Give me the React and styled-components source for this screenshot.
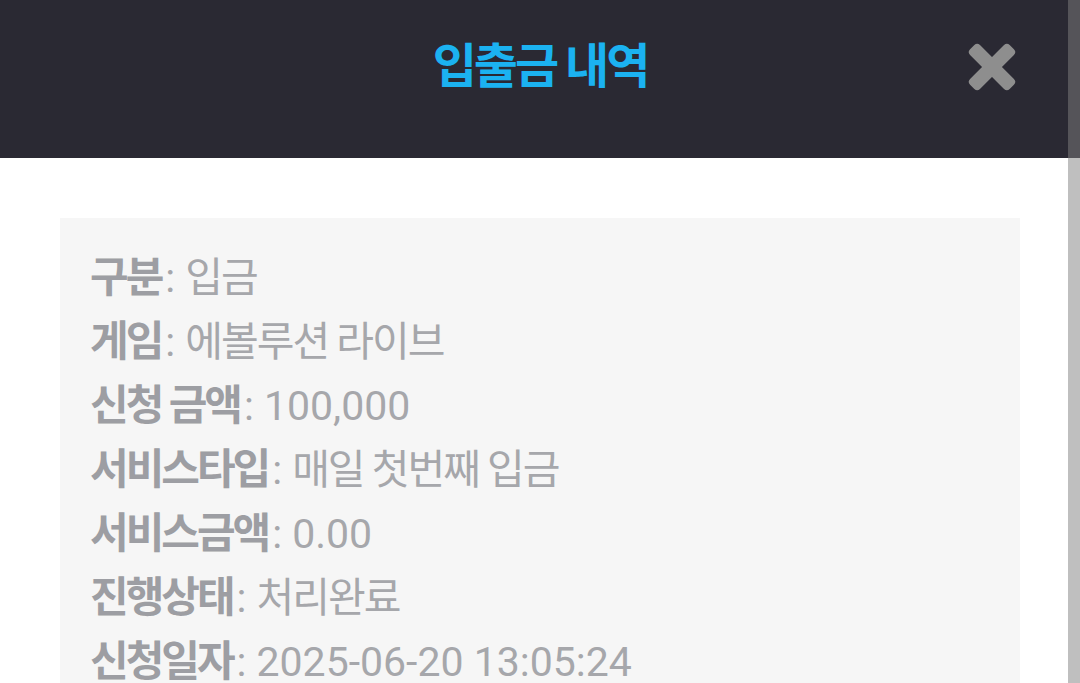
import React from "react";
import styled, { createGlobalStyle } from "styled-components";

const GlobalStyle = createGlobalStyle`
  html, body {
    margin: 0;
    padding: 0;
    overflow: hidden;
    background: #ffffff;
  }
  body {
    font-family: Roboto, "Noto Sans CJK KR", sans-serif;
  }
`;

const Page = styled.div`
  position: relative;
  width: 100%;
  min-height: 100vh;
  background: #ffffff;
`;

const Header = styled.header`
  display: grid;
  grid-template-columns: 1fr auto 1fr;
  align-items: center;
  align-content: start;
  height: 158px;
  box-sizing: border-box;
  padding: 38px 0 0;
  background: #2a2933;
`;

const Title = styled.h1`
  grid-column: 2;
  margin: 0;
  font-family: Roboto, "Noto Sans CJK KR", sans-serif;
  font-size: 48px;
  line-height: 58px;
  font-weight: 700;
  letter-spacing: -3px;
  color: #1bb2f1;
`;

const CloseButton = styled.button`
  grid-column: 3;
  justify-self: end;
  margin-right: 63px;
  width: 50px;
  height: 50px;
  padding: 0;
  border: 0;
  background: transparent;
  cursor: pointer;
  display: flex;
  align-items: center;
  justify-content: center;
`;

const Content = styled.main`
  padding: 60px 60px 0;
`;

const Card = styled.section`
  background: #f6f6f6;
  padding: 28px 30px 40px;
  display: flex;
  flex-direction: column;
`;

const Row = styled.div`
  font-size: 41px;
  line-height: 63px;
  white-space: nowrap;
  color: #a6a7ab;
`;

const Label = styled.span`
  font-size: 42px;
  font-weight: 700;
  color: #9d9ea3;
  letter-spacing: -3px;
  margin-right: 4px;
`;

const Value = styled.span`
  font-weight: 400;
  letter-spacing: ${(p) => (p.$ko ? "-2px" : "0")};
`;

const Colon = styled.span`
  margin-right: 10px;
`;

const ScrollBar = styled.div`
  position: fixed;
  top: 0;
  right: 0;
  bottom: 0;
  width: 12px;
  background: rgba(128, 128, 128, 0.5);
`;

const CloseIcon = () => (
  <svg width="50" height="50" viewBox="0 0 50 50" aria-hidden="true">
    <g fill="#8e8e8e">
      <rect x="-3" y="18" width="56" height="14" rx="4" transform="rotate(45 25 25)" />
      <rect x="-3" y="18" width="56" height="14" rx="4" transform="rotate(-45 25 25)" />
    </g>
  </svg>
);

const rows = [
  { label: "구분", value: "입금", ko: true },
  { label: "게임", value: "에볼루션 라이브", ko: true },
  { label: "신청 금액", value: "100,000", ko: false },
  { label: "서비스타입", value: "매일 첫번째 입금", ko: true },
  { label: "서비스금액", value: "0.00", ko: false },
  { label: "진행상태", value: "처리완료", ko: true },
  { label: "신청일자", value: "2025-06-20 13:05:24", ko: false },
];

export default function App() {
  return (
    <Page>
      <GlobalStyle />
      <Header>
        <Title>입출금 내역</Title>
        <CloseButton aria-label="닫기">
          <CloseIcon />
        </CloseButton>
      </Header>
      <Content>
        <Card>
          {rows.map((r) => (
            <Row key={r.label}>
              <Label>{r.label}</Label>
              <Colon>:</Colon>
              <Value $ko={r.ko}>{r.value}</Value>
            </Row>
          ))}
        </Card>
      </Content>
      <ScrollBar />
    </Page>
  );
}
